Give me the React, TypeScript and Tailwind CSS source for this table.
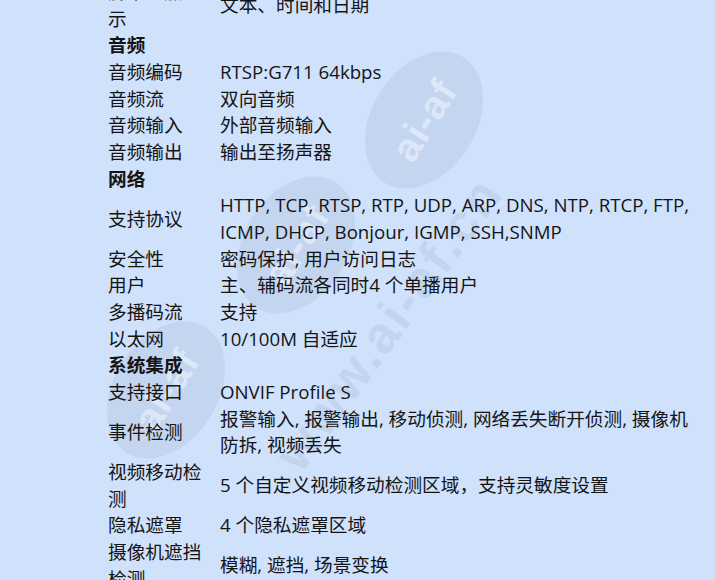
import React from "react";

type Row =
  | { kind: "head"; label: string }
  | { kind: "item"; label: React.ReactNode; value: React.ReactNode };

const rows: Row[] = [
  { kind: "head", label: "音频" },
  { kind: "item", label: "音频编码", value: "RTSP:G711 64kbps" },
  { kind: "item", label: "音频流", value: "双向音频" },
  { kind: "item", label: "音频输入", value: "外部音频输入" },
  { kind: "item", label: "音频输出", value: "输出至扬声器" },
  { kind: "head", label: "网络" },
  {
    kind: "item",
    label: "支持协议",
    value: (
      <>
        HTTP, TCP, RTSP, RTP, UDP, ARP, DNS, NTP, RTCP, FTP,
        <br />
        ICMP, DHCP, Bonjour, IGMP, SSH,SNMP
      </>
    ),
  },
  { kind: "item", label: "安全性", value: "密码保护, 用户访问日志" },
  { kind: "item", label: "用户", value: "主、辅码流各同时4 个单播用户" },
  { kind: "item", label: "多播码流", value: "支持" },
  { kind: "item", label: "以太网", value: "10/100M 自适应" },
  { kind: "head", label: "系统集成" },
  { kind: "item", label: "支持接口", value: "ONVIF Profile S" },
  {
    kind: "item",
    label: "事件检测",
    value: (
      <>
        报警输入, 报警输出, 移动侦测, 网络丢失断开侦测, 摄像机
        <br />
        防拆, 视频丢失
      </>
    ),
  },
  {
    kind: "item",
    label: (
      <>
        视频移动检
        <br />测
      </>
    ),
    value: "5 个自定义视频移动检测区域，支持灵敏度设置",
  },
  { kind: "item", label: "隐私遮罩", value: "4 个隐私遮罩区域" },
  {
    kind: "item",
    label: (
      <>
        摄像机遮挡
        <br />
        检测
      </>
    ),
    value: "模糊, 遮挡, 场景变换",
  },
];

function Watermark() {
  return (
    <div className="pointer-events-none absolute inset-0 overflow-hidden">
      {/* oval badges */}
      {[
        { left: "left-[350px]", top: "top-[68px]" },
        { left: "left-[222px]", top: "top-[193px]" },
        { left: "left-[92px]", top: "top-[338px]" },
      ].map((p, i) => (
        <div
          key={i}
          className={`absolute ${p.left} ${p.top} flex h-[104px] w-[148px] -rotate-[58deg] items-center justify-center rounded-[50%] bg-[#a3b2ca]/25`}
        >
          <span className="font-['Liberation_Sans',sans-serif] text-[40px] font-bold tracking-wide text-[#e4edfb]/75">
            ai-af
          </span>
        </div>
      ))}
      {/* diagonal site text */}
      <div className="absolute left-[215px] top-[310px] -rotate-[54deg] whitespace-nowrap font-['Liberation_Sans',sans-serif] text-[52px] font-bold tracking-wider text-[#a9b7cf]/30">
        www.ai-af.cn
      </div>
    </div>
  );
}

export default function App() {
  return (
    <div className="relative h-[580px] w-[715px] overflow-hidden bg-[#cfe1fb] font-['Open_Sans','Noto_Sans_CJK_SC',sans-serif] text-[18.67px] leading-[26.67px] text-[#141414]">
      <div className="relative z-10 mt-[-21px] grid grid-cols-[108px_112px_1fr]">
        {/* first, partly scrolled-off row */}
        <div className="pl-[26px]">P206VF</div>
        <div>
          屏幕叠加显
          <br />示
        </div>
        <div className="self-center">文本、时间和日期</div>

        {rows.map((r, i) =>
          r.kind === "head" ? (
            <React.Fragment key={i}>
              <div />
              <div className="col-span-2 font-bold">{r.label}</div>
            </React.Fragment>
          ) : (
            <React.Fragment key={i}>
              <div />
              <div className="self-center">{r.label}</div>
              <div className="self-center whitespace-nowrap">{r.value}</div>
            </React.Fragment>
          )
        )}
      </div>
      <Watermark />
    </div>
  );
}
